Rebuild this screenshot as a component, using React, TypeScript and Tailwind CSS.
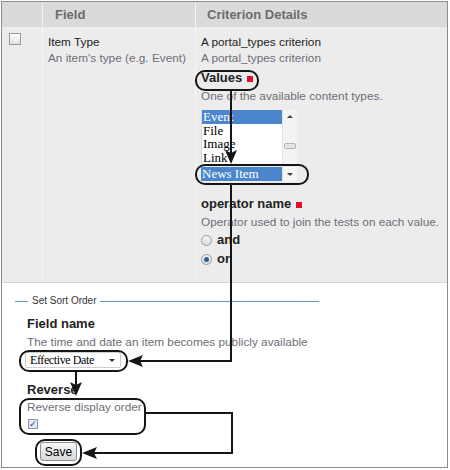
import React from "react";

const sans = { fontFamily: '"Liberation Sans", Arial, sans-serif' };
const serif = { fontFamily: '"Liberation Serif", "Times New Roman", serif' };

const RedMark = () => <span className="ml-[5px] inline-block h-[6px] w-[6px] bg-[#e0102c] align-middle" />;

const Radio = ({ checked }: { checked?: boolean }) => (
  <span className="flex h-[11px] w-[11px] items-center justify-center rounded-full border border-[#9a9a9a] bg-gradient-to-b from-[#f4f4f4] to-[#dcdcdc]">
    {checked && <span className="h-[5px] w-[5px] rounded-full bg-[#2e5f95]" />}
  </span>
);

// arrows + rounded outlines drawn over the form
const Annotations = () => {
  const s = { stroke: "#151515", strokeWidth: 2, fill: "none" };
  const head = (x: number, y: number, dir: "down" | "left") =>
    dir === "down"
      ? `M${x} ${y} L${x - 6} ${y - 14} L${x} ${y - 11} L${x + 6} ${y - 14} Z`
      : `M${x} ${y} L${x + 15} ${y - 6} L${x + 12} ${y} L${x + 15} ${y + 6} Z`;
  return (
    <svg className="pointer-events-none absolute left-0 top-0" width="450" height="470">
      <rect x="196" y="70" width="62" height="19" rx="9" {...s} />
      <rect x="196" y="164" width="112" height="19" rx="9" {...s} />
      <rect x="20" y="350" width="107" height="20" rx="9" {...s} />
      <rect x="20" y="398" width="125" height="35" rx="9" {...s} />
      <rect x="36" y="439" width="45" height="25" rx="9" {...s} />
      <path d="M231 89 V152" {...s} />
      <path d={head(231, 163, "down")} fill="#151515" />
      <path d="M231 183 V360 H140" {...s} />
      <path d={head(128, 360, "left")} fill="#151515" />
      <path d="M76 370 V384" {...s} />
      <path d={head(76, 395, "down")} fill="#151515" />
      <path d="M145 412 H232 V452 H94" {...s} />
      <path d={head(82, 452, "left")} fill="#151515" />
    </svg>
  );
};

export default function App() {
  const items = ["Event", "File", "Image", "Link"];
  return (
    <div className="relative h-[470px] w-[450px] bg-white text-[11.8px] text-[#222]" style={sans}>
      <div className="ml-px mt-px flex h-[467px] w-[447px] flex-col border border-[#8c8c8c]">
        {/* header */}
        <div className="grid h-[25px] grid-cols-[40px_153px_1fr] bg-[#dadada] text-[13px] font-bold text-[#6c6c6c]">
          <div />
          <div className="flex items-center border-l border-[#f2f2f2] pl-[12px]">Field</div>
          <div className="flex items-center border-l border-[#f2f2f2] pl-[11px]">Criterion Details</div>
        </div>

        {/* criterion row */}
        <div className="grid h-[256px] grid-cols-[40px_153px_1fr] border-b border-[#d6d6d6] bg-[#ececec]">
          <div className="pl-[7px] pt-[6px]">
            <span className="block h-[12px] w-[12px] border border-[#9a9a9a] bg-gradient-to-b from-[#fdfdfd] to-[#e2e2e2]" />
          </div>
          <div className="border-l border-[#f5f5f5] pl-[5px] pt-[7px] leading-[16px]">
            <div>Item Type</div>
            <div className="text-[#6f6c78]">An item's type (e.g. Event)</div>
          </div>
          <div className="border-l border-[#f5f5f5] pl-[5px] pt-[7px] leading-[16px]">
            <div>A portal_types criterion</div>
            <div className="text-[#6f6c78]">A portal_types criterion</div>
            <div className="mt-[4px] text-[13px] font-bold">
              Values
              <RedMark />
            </div>
            <div className="mt-[2px] text-[#6f6c78]">One of the available content types.</div>
            <div className="mt-[6px] flex h-[54px] w-[96px] overflow-hidden border-l border-[#d8d8d8] bg-white text-[13px]" style={serif}>
              <div className="flex-1">
                {items.map((it, i) => (
                  <div
                    key={it}
                    className={"h-[13.5px] pl-[1px] leading-[13px] " + (i === 0 ? "bg-[#4b86cc] text-white" : "text-black")}
                  >
                    {it}
                  </div>
                ))}
              </div>
              <div className="relative w-[15px] border-l border-[#e4e4e4] bg-[#f3f3f3]">
                <div className="mx-auto mt-[5px] h-0 w-0 border-x-[3px] border-b-[3px] border-x-transparent border-b-[#444]" />
                <div className="mx-[1px] mt-[25px] h-[6px] rounded-[2px] border border-[#b4b4b4] bg-[#e6e6e6]" />
              </div>
            </div>
            <div className="mt-[3px] flex h-[14px] w-[96px] bg-white text-[13px] leading-[14px]" style={serif}>
              <div className="flex-1 bg-[#4b86cc] pl-[1px] text-white">News Item</div>
              <div className="flex w-[15px] items-center justify-center border-l border-[#e4e4e4] bg-[#f6f6f6]">
                <div className="h-0 w-0 border-x-[3px] border-t-[3px] border-x-transparent border-t-[#444]" />
              </div>
            </div>
            <div className="mt-[15px] text-[13px] font-bold">
              operator name
              <RedMark />
            </div>
            <div className="mt-[2px] text-[#6f6c78]">Operator used to join the tests on each value.</div>
            <div className="mt-[2px] flex items-center gap-[5px] text-[13px] font-bold">
              <Radio />
              and
            </div>
            <div className="mt-[3px] flex items-center gap-[5px] text-[13px] font-bold">
              <Radio checked />
              or
            </div>
          </div>
        </div>

        {/* sort order */}
        <div className="flex-1 bg-white pt-[12px] leading-[16px]">
          <div className="flex h-[12px] items-center">
            <span className="ml-[13px] h-px w-[13px] bg-[#5d9bd0]" />
            <span className="px-[4px] text-[10px] text-[#333]">Set Sort Order</span>
            <span className="h-px w-[219px] bg-[#5d9bd0]" />
          </div>
          <div className="pl-[25px]">
            <div className="mt-[9px] text-[13px] font-bold">Field name</div>
            <div className="mt-[2px] text-[#6f6c78]">The time and date an item becomes publicly available</div>
            <div className="-ml-[2px] mt-[2px] flex h-[16px] w-[96px] items-center justify-between rounded-[2px] border border-[#d0d0d0] bg-white pl-[4px] pr-[5px] text-[12px] tracking-[-0.4px] text-black" style={serif}>
              Effective Date
              <span className="h-0 w-0 border-x-[3px] border-t-[3px] border-x-transparent border-t-[#333]" />
            </div>
            <div className="mt-[14px] text-[13px] font-bold">Reverse</div>
            <div className="mt-px text-[#6f6c78]">Reverse display order</div>
            <div className="ml-[1px] mt-[4px] flex h-[10px] w-[10px] items-center justify-center border border-[#8a94b8] bg-[#e4e8f4] text-[9px] leading-none text-[#233a7a]">
              ✓
            </div>
            <button className="ml-[13px] mt-[13px] h-[19px] w-[37px] rounded-[3px] border border-[#8f8f8f] bg-gradient-to-b from-[#f7f7f7] to-[#d9d9d9] text-[12px] leading-none text-black">
              Save
            </button>
          </div>
        </div>
      </div>
      <Annotations />
    </div>
  );
}
